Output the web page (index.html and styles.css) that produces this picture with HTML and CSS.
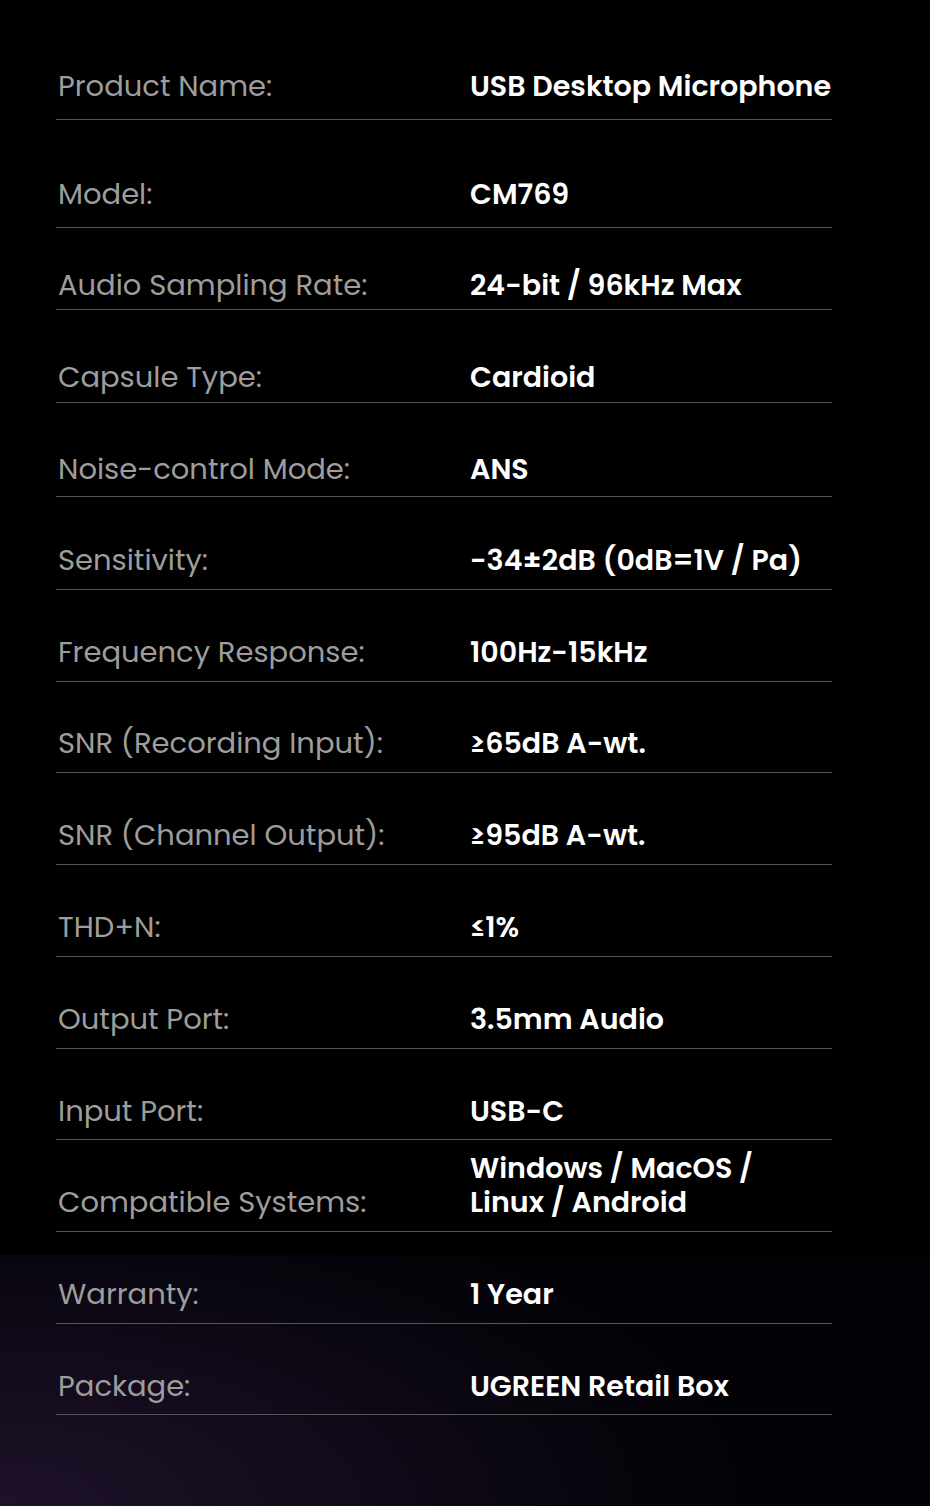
FILE: index.html
```html
<!DOCTYPE html>
<html lang="en">
<head>
<meta charset="utf-8">
<title>Specifications</title>
<link rel="stylesheet" href="styles.css">
</head>
<body>
<div class="page">
  <div class="specs">
    <div class="row r1"><div class="label">Product Name:</div><div class="value">USB Desktop Microphone</div></div>
    <div class="row r2"><div class="label">Model:</div><div class="value">CM769</div></div>
    <div class="row r3"><div class="label">Audio Sampling Rate:</div><div class="value">24-bit / 96kHz Max</div></div>
    <div class="row r4"><div class="label">Capsule Type:</div><div class="value">Cardioid</div></div>
    <div class="row r5"><div class="label">Noise-control Mode:</div><div class="value">ANS</div></div>
    <div class="row r6"><div class="label">Sensitivity:</div><div class="value">-34±2dB (0dB=1V / Pa)</div></div>
    <div class="row r7"><div class="label">Frequency Response:</div><div class="value">100Hz-15kHz</div></div>
    <div class="row r8"><div class="label">SNR (Recording Input):</div><div class="value">≥65dB A-wt.</div></div>
    <div class="row r9"><div class="label">SNR (Channel Output):</div><div class="value">≥95dB A-wt.</div></div>
    <div class="row r10"><div class="label">THD+N:</div><div class="value">≤1%</div></div>
    <div class="row r11"><div class="label">Output Port:</div><div class="value">3.5mm Audio</div></div>
    <div class="row r12"><div class="label">Input Port:</div><div class="value">USB-C</div></div>
    <div class="row r13"><div class="label">Compatible Systems:</div><div class="value">Windows / MacOS /<br>Linux / Android</div></div>
    <div class="row r14"><div class="label">Warranty:</div><div class="value">1 Year</div></div>
    <div class="row r15"><div class="label">Package:</div><div class="value">UGREEN Retail Box</div></div>
  </div>
</div>
</body>
</html>
```

FILE: styles.css
```css
* { box-sizing: border-box; }
html, body { margin: 0; padding: 0; background: #000; }
body { width: 930px; height: 1506px; overflow: hidden; }
.page {
  width: 930px;
  height: 1506px;
  background-color: #000;
  background-image:
    radial-gradient(ellipse 760px 330px at 0% 100%, #1e1229 0%, #120b1b 45%, #06040b 85%, #030206 100%);
  background-size: 930px 251px;
  background-position: left bottom;
  background-repeat: no-repeat;
  font-family: "Poppins", "Inter", "Open Sans", sans-serif;
}
.specs {
  margin-left: 56px;
  width: 776px;
  display: flex;
  flex-direction: column;
}
.row {
  display: grid;
  grid-template-columns: 412px 1fr;
  align-items: end;
  border-bottom: 1px solid #555;
  padding-bottom: 12px;
  padding-left: 2px;
  height: 92px;
  line-height: 34px;
}
.label {
  color: #9d9d9d;
  font-size: 29px;
  font-weight: 400;
}
.value {
  color: #fff;
  font-size: 28.5px;
  font-weight: 600;
}
.r1 { height: 120px; padding-bottom: 16px; }
.r2 { height: 108px; padding-bottom: 16px; }
.r3 { height: 82px; padding-bottom: 7px; }
.r4 { height: 93px; padding-bottom: 8px; }
.r5 { height: 94px; padding-bottom: 10px; }
.r6 { height: 93px; }
.r7 { height: 92px; }
.r8 { height: 91px; }
.r9 { height: 92px; }
.r10 { height: 92px; }
.r11 { height: 92px; }
.r12 { height: 91px; padding-bottom: 11px; }
.r13 { height: 92px; }
.r14 { height: 92px; }
.r15 { height: 91px; padding-bottom: 11px; }
```
